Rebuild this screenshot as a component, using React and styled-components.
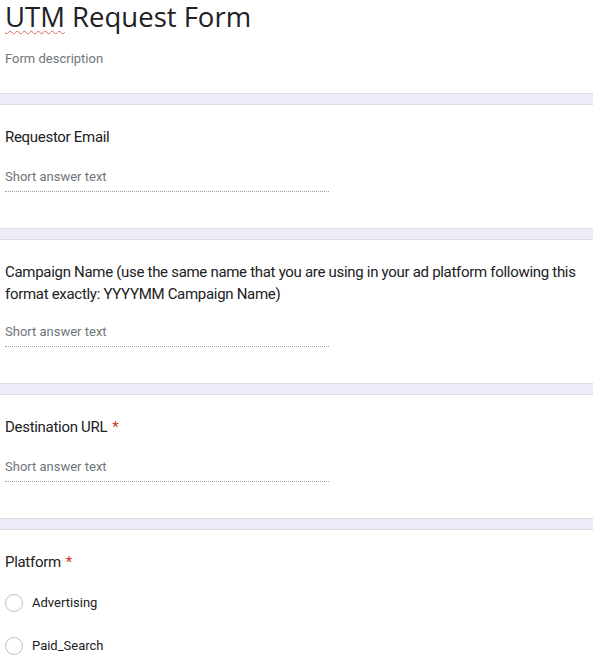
import React from "react";
import styled, { createGlobalStyle } from "styled-components";

const Global = createGlobalStyle`
  html, body { margin: 0; padding: 0; background: #fff; }
  body { font-family: Roboto, "Liberation Sans", sans-serif; color: #202124; }
`;

const Page = styled.div`
  display: flex;
  flex-direction: column;
  width: 593px;
`;

const Header = styled.header`
  padding: 0 5px 24px;
`;

const Title = styled.h1`
  margin: 0;
  font-family: "Open Sans", Roboto, sans-serif;
  font-weight: 400;
  font-size: 27.5px;
  line-height: 34px;
  color: #202124;
`;

const Misspelled = styled.span`
  text-decoration: underline wavy #e06666;
  text-decoration-thickness: 1px;
  text-underline-offset: 3px;
`;

const Description = styled.div`
  margin-top: 15px;
  font-size: 13px;
  line-height: 20px;
  color: #70757a;
`;

const Band = styled.div`
  height: 10px;
  background: #f0ebf8;
  border-top: 1px solid #dadce0;
  border-bottom: 1px solid #dadce0;
`;

const Card = styled.section`
  display: flex;
  flex-direction: column;
  gap: 17px;
  padding: 21px 5px 36px;
`;

const Question = styled.div`
  min-height: 24px;
  font-family: Roboto, "Liberation Sans", sans-serif;
  font-size: 15px;
  line-height: 22px;
  color: #202124;
  letter-spacing: -0.3px;
`;

const Required = styled.span`
  color: #d93025;
  margin-left: 5px;
`;

const ShortAnswer = styled.div`
  width: 324px;
  font-size: 13px;
  line-height: 20px;
  color: #70757a;
  padding-bottom: 4px;
  border-bottom: 1px dotted #9aa0a6;
`;

const Options = styled.div`
  display: flex;
  flex-direction: column;
  gap: 23px;
  padding-top: 1px;
`;

const Option = styled.label`
  display: flex;
  align-items: center;
  gap: 9px;
  font-size: 13px;
  line-height: 20px;
  color: #202124;
`;

const Radio = styled.span`
  box-sizing: border-box;
  width: 18px;
  height: 18px;
  border-radius: 50%;
  border: 1px solid #bdc1c6;
  flex: none;
`;

const questions = [
  { text: "Requestor Email" },
  {
    text:
      "Campaign Name (use the same name that you are using in your ad platform following this format exactly: YYYYMM Campaign Name)",
  },
  { text: "Destination URL", required: true },
];

export default function App() {
  return (
    <>
      <Global />
      <Page>
        <Header>
          <Title>
            <Misspelled>UTM</Misspelled> Request Form
          </Title>
          <Description>Form description</Description>
        </Header>
        {questions.map((q, i) => (
          <React.Fragment key={i}>
            <Band />
            <Card>
              <Question>
                {q.text}
                {q.required && <Required>*</Required>}
              </Question>
              <ShortAnswer>Short answer text</ShortAnswer>
            </Card>
          </React.Fragment>
        ))}
        <Band />
        <Card>
          <Question>
            Platform<Required>*</Required>
          </Question>
          <Options>
            <Option>
              <Radio />
              Advertising
            </Option>
            <Option>
              <Radio />
              Paid_Search
            </Option>
          </Options>
        </Card>
      </Page>
    </>
  );
}
